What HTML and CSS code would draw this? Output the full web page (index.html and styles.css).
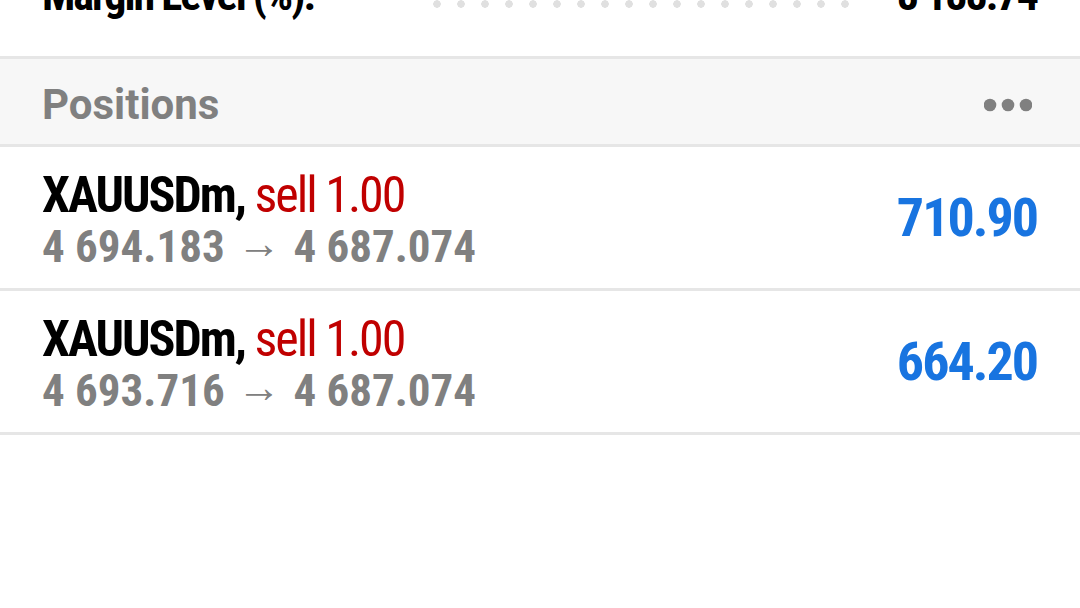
FILE: index.html
```html
<!DOCTYPE html>
<html lang="en">
<head>
    <meta charset="UTF-8">
    <meta name="viewport" content="width=device-width, initial-scale=1.0">
    <title>Trade</title>
    <link rel="stylesheet" href="styles.css">
</head>
<body>
    <div class="screen">
        <div class="summary-row">
            <span class="summary-label">Margin Level (%):</span>
            <span class="leader"></span>
            <span class="summary-value">8 188.74</span>
        </div>

        <div class="section-head">
            <span class="section-title">Positions</span>
            <svg class="more" width="48" height="14" viewBox="0 0 48 14">
                <circle cx="6" cy="7" r="6.3" fill="#808080"/>
                <circle cx="24" cy="7" r="6.3" fill="#808080"/>
                <circle cx="42" cy="7" r="6.3" fill="#808080"/>
            </svg>
        </div>

        <div class="position">
            <div class="position-info">
                <div class="position-title"><b>XAUUSDm,</b> <span class="sell">sell 1.00</span></div>
                <div class="position-prices">4 694.183 <span class="arrow">&rarr;</span> 4 687.074</div>
            </div>
            <div class="profit">710.90</div>
        </div>

        <div class="position">
            <div class="position-info">
                <div class="position-title"><b>XAUUSDm,</b> <span class="sell">sell 1.00</span></div>
                <div class="position-prices">4 693.716 <span class="arrow">&rarr;</span> 4 687.074</div>
            </div>
            <div class="profit">664.20</div>
        </div>
    </div>
</body>
</html>
```

FILE: styles.css
```css
html, body {
    margin: 0;
    padding: 0;
    background: #fff;
}
body {
    font-family: "Roboto Condensed", "Liberation Sans Narrow", Roboto, sans-serif;
    overflow: hidden;
}
.screen {
    width: 1080px;
    height: 608px;
    overflow: hidden;
}
.summary-row {
    display: flex;
    align-items: flex-end;
    margin-top: -31px;
    padding: 0 43px 35px 42px;
    border-bottom: 3px solid #e6e6e6;
    font-size: 44px;
    line-height: 52px;
    font-weight: bold;
    letter-spacing: -2px;
    color: #000;
}
.leader {
    flex: none;
    width: 440px;
    height: 8px;
    margin: 0 32px 13px auto;
    background-image: radial-gradient(circle, #e0e0e0 3.5px, transparent 4px);
    background-size: 24px 8px;
    background-repeat: repeat-x;
}
.section-head {
    display: flex;
    justify-content: space-between;
    align-items: center;
    height: 85px;
    padding: 0 48px 0 42px;
    background: #f7f7f7;
    border-bottom: 3px solid #e6e6e6;
}
.section-title {
    font-family: Roboto, sans-serif;
    font-weight: bold;
    font-size: 42px;
    color: #808080;
    padding-top: 6px;
}
.more {
    display: block;
    margin-top: 6px;
}
.position {
    display: flex;
    justify-content: space-between;
    align-items: center;
    height: 141px;
    padding: 0 43px 0 42px;
    border-bottom: 3px solid #e6e6e6;
}
.position-info {
    padding-top: 7px;
}
.position-title {
    font-size: 50px;
    line-height: 52px;
    letter-spacing: -2px;
    color: #000;
}
.sell {
    color: #c00000;
}
.position-prices {
    font-size: 45px;
    line-height: 52px;
    font-weight: bold;
    color: #808080;
}
.arrow {
    font-weight: normal;
    font-size: 44px;
    margin: 0 2px;
    position: relative;
    top: -4px;
}
.profit {
    font-size: 54px;
    font-weight: bold;
    letter-spacing: -2px;
    color: #1874e0;
}
```
